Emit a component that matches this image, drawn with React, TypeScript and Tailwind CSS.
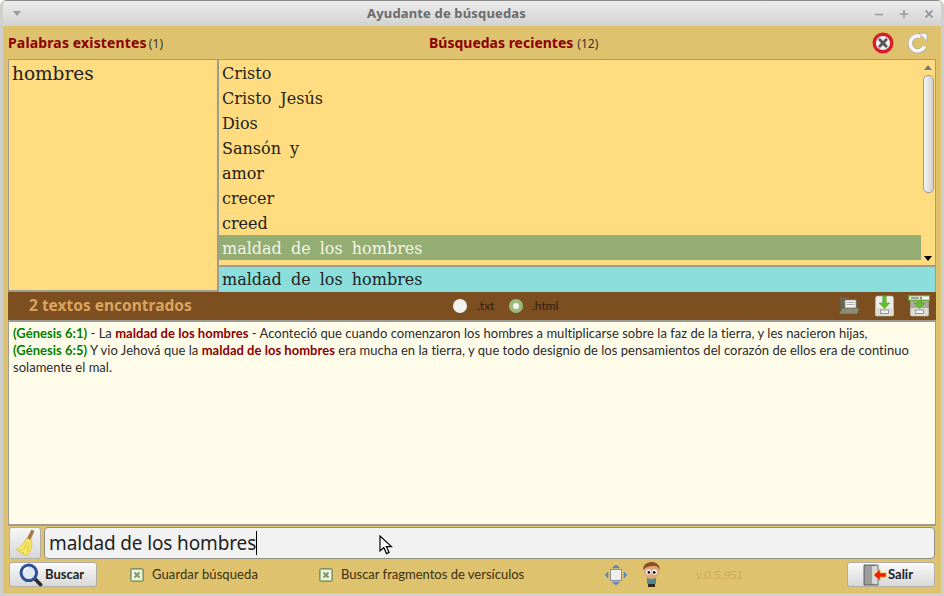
import React from "react";

const ui = "font-['Lato','Noto_Sans',sans-serif]";

const recientes = ["Cristo", "Cristo Jesús", "Dios", "Sansón y", "amor", "crecer", "creed"];

function CloseIcon() {
  return (
    <svg width="22" height="22" viewBox="0 0 22 22">
      <circle cx="11" cy="11" r="8.800" fill="#efefef" stroke="#d8202c" strokeWidth="3.400" />
      <path d="M7.800 7.800l6.400 6.400M14.200 7.800l-6.400 6.400" stroke="#555" strokeWidth="2.800" strokeLinecap="round" />
    </svg>
  );
}

function RefreshIcon() {
  return (
    <svg width="22" height="22" viewBox="0 0 22 22">
      <path d="M17.500 14.500A7.500 7.500 0 1 1 13.500 4.500" fill="none" stroke="#a9a9a0" strokeWidth="5" />
      <path d="M17.500 14.500A7.500 7.500 0 1 1 13.500 4.500" fill="none" stroke="#f6f6f6" strokeWidth="3.600" />
      <path d="M12 1L20 1.500V9.500Z" fill="#f6f6f6" stroke="#a9a9a0" strokeWidth="0.800" />
    </svg>
  );
}

function FolderIcon() {
  return (
    <svg width="22" height="20" viewBox="0 0 22 20">
      <path d="M2 1h7l2 2h8v10H2z" fill="#66664f" />
      <rect x="7" y="4" width="11" height="8.500" fill="#f2f2f2" stroke="#8a8a78" strokeWidth="0.600" />
      <path d="M8.500 6.500h8M8.500 8.500h8" stroke="#999" strokeWidth="0.800" />
      <path d="M4 12h17.500l-2 6H1z" fill="#8c8c72" stroke="#55553f" strokeWidth="0.600" />
    </svg>
  );
}

function CabinetIcon({ label }: { label?: boolean }) {
  return (
    <svg width="22" height="22" viewBox="0 0 22 22">
      <rect x="2.500" y="1" width="18" height="20" rx="2" fill={label ? "#a8aa9c" : "#eeeeea"} stroke="#b0b0a8" strokeWidth="0.600" />
      <rect x="2.500" y="13" width="18" height="8" fill="#dcdcd6" />
      <rect x="7.500" y="15" width="8" height="3.500" fill="#f4f4f4" stroke="#777" strokeWidth="0.700" />
      <path d="M9.800 1h3.400v7h3.600l-5.300 5.400-5.300-5.400h3.600z" fill="#66c02c" stroke="#3f8f14" strokeWidth="0.500" />
      {label && (
        <>
          <rect x="0.700" y="0.700" width="21" height="4.600" fill="#f4f4f4" stroke="#5fa820" strokeWidth="1.200" />
          <rect x="3" y="2.200" width="8" height="1.800" fill="#999" />
          <rect x="12.500" y="1.800" width="1" height="2.600" fill="#222" />
        </>
      )}
    </svg>
  );
}

function BroomIcon() {
  return (
    <svg width="24" height="28" viewBox="0 0 24 28">
      <path d="M18.500 1l2.400 1.200-3.600 8.300-2.800-1.300z" fill="#b07c3c" stroke="#805520" strokeWidth="0.500" />
      <path d="M13.500 9l5 2.400c1 4.600-.5 10.600-3.500 14.600-1.800.4-3.600 0-5-.8l.4-2.200-2 1.400-2-1.200 1-2-2.600.8L3 20.500C7.500 18 11.500 14 13.500 9z" fill="#f6e665" stroke="#cdb43c" strokeWidth="0.600" />
      <path d="M14 13l-3.500 8M16 14l-1.500 9" stroke="#d4bb40" strokeWidth="0.700" />
    </svg>
  );
}

function SearchIcon() {
  return (
    <svg width="24" height="24" viewBox="0 0 24 24">
      <path d="M15 15l6.500 6.500" stroke="#2c2c2c" strokeWidth="3.800" strokeLinecap="round" />
      <circle cx="9.800" cy="9.800" r="7.800" fill="#dfe8f6" stroke="#2f4f9a" strokeWidth="3" />
      <path d="M5 9a4.500 4.500 0 0 1 4-4" fill="none" stroke="#fff" strokeWidth="1.500" />
    </svg>
  );
}

function Check() {
  return (
    <span className="flex h-[14px] w-[14px] items-center justify-center rounded-[2px] border border-[#7f9a5e] bg-[#a5bd85]">
      <span className="flex h-[10px] w-[10px] items-center justify-center bg-[#f0f2ea]">
        <svg width="8" height="8" viewBox="0 0 8 8">
          <path d="M1.500 1.500l5 5M6.500 1.500l-5 5" stroke="#7f9a5e" strokeWidth="2" />
        </svg>
      </span>
    </span>
  );
}

function MoveIcon() {
  return (
    <svg width="24" height="22" viewBox="0 0 24 22">
      <rect x="6.500" y="5.500" width="11" height="11" fill="#eeeeee" stroke="#8f8f8f" />
      <path d="M12 1l3.500 2.800h-7zM12 21l3.500-2.800h-7zM1 11l3-3v6zM23 11l-3-3v6z" fill="#5b8fd0" stroke="#3f6fae" strokeWidth="0.500" />
    </svg>
  );
}

function BoyIcon() {
  return (
    <svg width="24" height="26" viewBox="0 0 24 26">
      <rect x="8" y="15" width="9" height="7" rx="1" fill="#4f8a8e" />
      <rect x="9" y="22" width="7" height="3" fill="#3a2a1a" />
      <circle cx="12.500" cy="9" r="8" fill="#e0a878" />
      <path d="M4 8c0-6 5-8 9-8s8 3 8 8c-2-3-3-4-5-4S7 4 4 8z" fill="#8a5020" />
      <circle cx="9.500" cy="10" r="2.600" fill="#fff" />
      <circle cx="15.500" cy="10" r="2.600" fill="#fff" />
      <circle cx="9.800" cy="10.400" r="1.400" fill="#111" />
      <circle cx="15.200" cy="10.400" r="1.400" fill="#111" />
    </svg>
  );
}

function ExitIcon() {
  return (
    <svg width="24" height="24" viewBox="0 0 24 24">
      <path d="M1 2h14v20H1z" fill="#9c9c9c" stroke="#444" strokeWidth="0.800" />
      <path d="M9 3.500l5.500-1v19l-5.500-1z" fill="#d8d8d8" />
      <path d="M23 10h-6V6.500L11 12l6 5.500V14h6z" fill="#f01808" stroke="#e8a000" strokeWidth="0.700" />
    </svg>
  );
}

function Pointer() {
  return (
    <svg width="14" height="20" viewBox="0 0 14 20" className="absolute left-[376px] top-[535px]">
      <path d="M1 1v15l3.800-3.400 2.700 6 2.600-1.100-2.700-5.900H12.500z" fill="#fff" stroke="#000" strokeWidth="1.200" />
    </svg>
  );
}

function Radio({ checked }: { checked?: boolean }) {
  return (
    <span className={`flex h-[14px] w-[14px] items-center justify-center rounded-full ${checked ? "bg-[#9db97e]" : "bg-[#f2f2f2]"}`}>
      {checked && <span className="h-[6px] w-[6px] rounded-full bg-[#f2f2f2]" />}
    </span>
  );
}

export default function App() {
  return (
    <div className={`relative flex h-[596px] w-[944px] flex-col overflow-hidden rounded-t-[6px] border-x-[3px] border-b-[3px] border-[#cfcfcb] bg-[#dfc26e] ${ui}`}>
      {/* title bar */}
      <div className="relative -mx-[3px] flex h-[26px] shrink-0 items-center rounded-t-[6px] border-t border-[#8a8a8a] bg-gradient-to-b from-[#ececec] to-[#d2d2d2] pl-[13px] pr-[10px]">
        <span className="h-0 w-0 border-x-[4px] border-t-[5px] border-x-transparent border-t-[#9a9a9a]" />
        <span className="flex-1 pr-[2px] text-center font-['Noto_Sans',sans-serif] text-[13px] font-bold tracking-[0.15px] text-[#6b6b6b]">Ayudante de búsquedas</span>
        <div className="flex items-center gap-[15px]">
          <svg width="10" height="10" viewBox="0 0 10 10"><path d="M1 5.500h8" stroke="#9a9a9a" strokeWidth="1.600" /></svg>
          <svg width="10" height="10" viewBox="0 0 10 10"><path d="M1 5h8M5 1v8" stroke="#9a9a9a" strokeWidth="1.600" /></svg>
          <svg width="10" height="10" viewBox="0 0 10 10"><path d="M1.500 1.500l7 7M8.500 1.500l-7 7" stroke="#9a9a9a" strokeWidth="1.800" /></svg>
        </div>
      </div>

      {/* column headers */}
      <div className="flex h-[33px] shrink-0 items-center pl-[5px] pr-[12px]">
        <div className="w-[210px] font-['Noto_Sans',sans-serif] text-[14px] font-bold tracking-[0.15px] text-[#8b0000]">
          Palabras existentes<span className="ml-[2px] text-[12px] font-normal text-[#333]">(1)</span>
        </div>
        <div className="flex-1 pl-[211px] font-['Noto_Sans',sans-serif] text-[14px] font-bold text-[#8b0000]">
          Búsquedas recientes<span className="ml-[4px] text-[12px] font-normal text-[#333]">(12)</span>
        </div>
        <div className="flex items-center gap-[13px]">
          <CloseIcon />
          <RefreshIcon />
        </div>
      </div>

      {/* words and recent searches */}
      <div className="mx-[5px] flex h-[233px] shrink-0 border border-b-2 border-[#9c9c94] bg-[#ffdc7f] font-['DejaVu_Serif',serif] text-[#222]">
        <div className="w-[210px] shrink-0 border-r-2 border-[#9c9c94] pl-[3px] text-[18.500px] leading-[27px]">hombres</div>
        <div className="flex min-w-0 flex-1 flex-col">
          <div className="flex h-[207px] shrink-0 border-b-2 border-[#9c9c94]">
            <div className="min-w-0 flex-1 text-[16px] leading-[27px] [word-spacing:4px]">
              {recientes.map((r) => (
                <div key={r} className="h-[25px] pl-[3px]">{r}</div>
              ))}
              <div className="h-[25px] bg-[#93ad72] pl-[3px] text-[#f5f5ea]">maldad de los hombres</div>
            </div>
            <div className="flex w-[14px] shrink-0 flex-col items-center pt-[5px]">
              <span className="h-0 w-0 border-x-[4px] border-b-[5px] border-x-transparent border-b-[#7a7a7a]" />
              <span className="mt-[5px] h-[118px] w-[11px] rounded-[5px] border border-[#9a9a9a] bg-gradient-to-r from-[#f4f4f4] to-[#d0d0d0]" />
              <span className="mt-[63px] h-0 w-0 border-x-[4px] border-t-[5px] border-x-transparent border-t-black" />
            </div>
          </div>
          <div className="flex-1 bg-[#8adfdd] pl-[3px] text-[16px] leading-[26px] [word-spacing:4px]">maldad de los hombres</div>
        </div>
      </div>

      {/* results bar */}
      <div className="mx-[5px] flex h-[28px] shrink-0 items-center bg-[#7c4e20]">
        <span className="w-[445px] pl-[21px] font-['Noto_Sans',sans-serif] text-[15.500px] font-bold text-[#d9a45e]">2 textos encontrados</span>
        <Radio />
        <span className="ml-[10px] w-[32px] text-[12px] text-[#2e2010]">.txt</span>
        <Radio checked />
        <span className="ml-[9px] text-[12px] text-[#2e2010]">.html</span>
        <div className="ml-auto flex items-center gap-[13px] pr-[6px]">
          <FolderIcon />
          <CabinetIcon />
          <CabinetIcon label />
        </div>
      </div>

      {/* results text */}
      <div className="mx-[5px] h-[206px] shrink-0 border border-t-2 border-b-2 border-[#9c9c94] bg-[#fffdea] px-[4px] pt-[3px] text-[13px] leading-[17px] tracking-[0.025px] text-[#2a2a2a]">
        <b className="text-[#008000]">(Génesis 6:1)</b> - La <b className="text-[#8b0000]">maldad de los hombres</b> - Aconteció que cuando comenzaron los hombres a multiplicarse sobre la faz de la tierra, y les nacieron hijas,
        <br />
        <b className="text-[#008000]">(Génesis 6:5)</b> Y vio Jehová que la <b className="text-[#8b0000]">maldad de los hombres</b> era mucha en la tierra, y que todo designio de los pensamientos del corazón de ellos era de continuo
        <br />
        solamente el mal.
      </div>

      {/* input row */}
      <div className="mx-[6px] mt-[1px] flex h-[32px] shrink-0 gap-[3px]">
        <button className="flex w-[32px] items-center justify-center rounded-[3px] border border-[#b0b0a8] bg-gradient-to-b from-[#f6f6f6] to-[#d8d8d8]">
          <BroomIcon />
        </button>
        <div className="flex flex-1 items-center rounded-[4px] border border-[#8f8f88] bg-[#f2f2f2] pl-[4px] font-['Noto_Sans',sans-serif] text-[19px] tracking-[-0.14px] text-[#222]">
          <span className="border-r border-black leading-[24px]">maldad de los hombres</span>
        </div>
      </div>

      {/* bottom row */}
      <div className="mx-[6px] mt-[3px] flex h-[25px] items-center text-[13px] text-[#3a3010]">
        <button className="flex h-[25px] w-[88px] items-center gap-[2px] rounded-[3px] border border-[#b0b0a8] bg-gradient-to-b from-[#fafafa] to-[#d8d8d8] pl-[9px] font-bold text-[#222]">
          <SearchIcon />
          Buscar
        </button>
        <span className="ml-[33px]"><Check /></span>
        <span className="ml-[8px] w-[167px] tracking-[0.1px]">Guardar búsqueda</span>
        <Check />
        <span className="ml-[8px] w-[263px]">Buscar fragmentos de versículos</span>
        <MoveIcon />
        <span className="ml-[11px]"><BoyIcon /></span>
        <span className="ml-[33px] font-['Liberation_Serif',serif] text-[13px] italic text-[#cfa85e]">v.0.5.951</span>
        <button className="ml-auto flex h-[25px] w-[88px] items-center gap-[1px] rounded-[3px] border border-[#b0b0a8] bg-gradient-to-b from-[#fafafa] to-[#d8d8d8] pl-[15px] font-bold text-[#222]">
          <ExitIcon />
          Salir
        </button>
      </div>
      <Pointer />
    </div>
  );
}
